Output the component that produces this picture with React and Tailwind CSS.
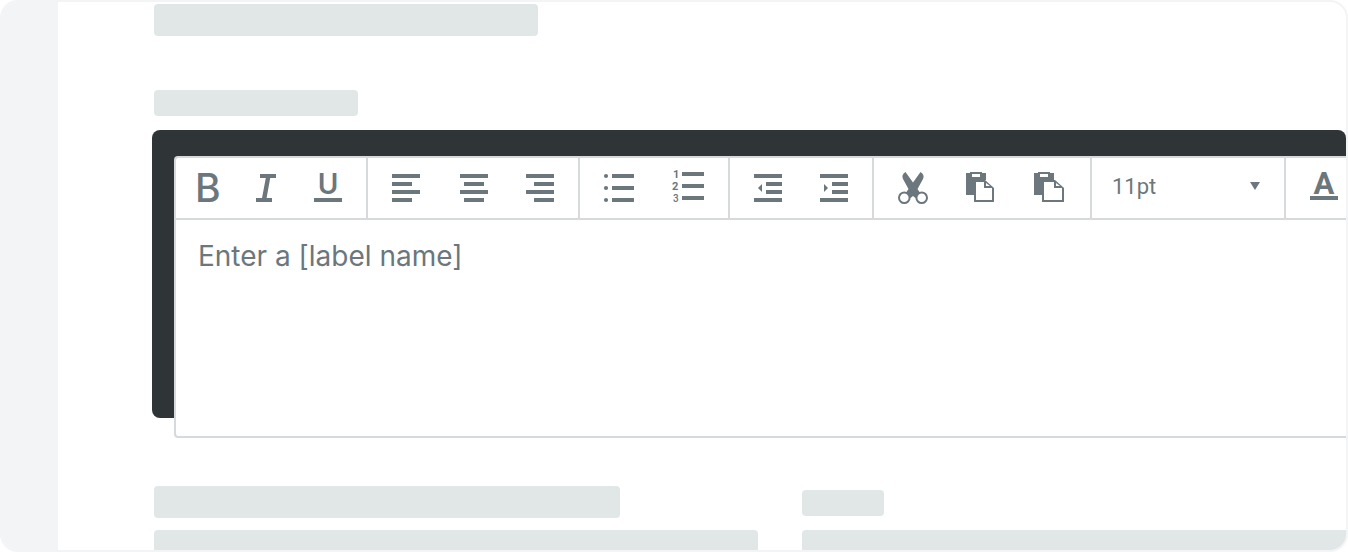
const bar = "rounded bg-[#e1e6e6]";

function Icon({ children }) {
  return (
    <svg
      viewBox="0 0 32 32"
      className="block size-8 overflow-visible"
      fill="currentColor"
      aria-hidden="true"
    >
      {children}
    </svg>
  );
}

function Tool({ label, children }) {
  return (
    <button type="button" aria-label={label} className="size-8 shrink-0">
      <Icon>{children}</Icon>
    </button>
  );
}

function Group({ className, children }) {
  return (
    <div role="group" className={`flex shrink-0 items-center border-r-2 border-[#d7dadd] ${className}`}>
      {children}
    </div>
  );
}

function Clipboard({ right }) {
  return (
    <>
      <path
        fillRule="evenodd"
        d="M2 1H6V0H18V1H22V8H10V23H2ZM8 2V5H16V2Z"
      />
      <path
        fillRule="evenodd"
        d={`M10 8H${right - 9}L${right} 16V30H10ZM12 10V28H${right - 2}V16H${right - 10}V10ZM${right - 8} 11V14H${right - 4}Z`}
      />
    </>
  );
}

function Toolbar() {
  return (
    <div role="toolbar" aria-label="Formatting" className="flex h-[62px] border-b-2 border-[#d7dadd] text-[#6b777c]">
      <Group className="w-48 gap-[26px] pl-5">
        <Tool label="Bold">
          <text x="-1" y="30" className="font-[Inter] text-[39px] font-medium">B</text>
        </Tool>
        <Tool label="Italic">
          <path d="M6 2H22V6H16.2L12.6 26H18V30H2V26H8L11.8 6H6Z" />
        </Tool>
        <Tool label="Underline">
          <text x="16" y="22" textAnchor="middle" className="font-[Inter] text-[28px] font-semibold">U</text>
          <path d="M2 26H30V30H2Z" />
        </Tool>
      </Group>
      <Group className="w-[212px] gap-[35px] pl-[22px]">
        <Tool label="Align left">
          <path d="M2 2H30V6H2ZM2 10H22V14H2ZM2 18H30V22H2ZM2 26H22V30H2Z" />
        </Tool>
        <Tool label="Align center">
          <path d="M3 2H31V6H3ZM7 10H27V14H7ZM3 18H31V22H3ZM7 26H27V30H7Z" />
        </Tool>
        <Tool label="Align right">
          <path d="M2 2H30V6H2ZM10 10H30V14H10ZM2 18H30V22H2ZM10 26H30V30H10Z" />
        </Tool>
      </Group>
      <Group className="w-[150px] gap-[38px] pl-[22px]">
        <Tool label="Bulleted list">
          <circle cx="4" cy="4" r="2.1" />
          <circle cx="4" cy="16" r="2.1" />
          <circle cx="4" cy="28" r="2.1" />
          <path d="M10 2H32V6H10ZM10 14H32V18H10ZM10 26H32V30H10Z" />
        </Tool>
        <Tool label="Numbered list">
          <g className="font-[Roboto] text-[11px] font-bold">
            <text x="1" y="6">1</text>
            <text x="0" y="18">2</text>
            <text x="1" y="30" className="text-[10px] font-medium">3</text>
          </g>
          <path d="M10 0H32V4H10ZM10 12H32V16H10ZM10 24H32V28H10Z" />
        </Tool>
      </Group>
      <Group className="w-36 gap-[34px] pl-[22px]">
        <Tool label="Decrease indent">
          <path d="M2 2H30V6H2ZM14 10H30V14H14ZM14 18H30V22H14ZM2 26H30V30H2ZM10 12V20L6 16Z" />
        </Tool>
        <Tool label="Increase indent">
          <path d="M2 2H30V6H2ZM14 10H30V14H14ZM14 18H30V22H14ZM2 26H30V30H2ZM6 12V20L10 16Z" />
        </Tool>
      </Group>
      <Group className="w-[218px] gap-9 pl-[22px]">
        <Tool label="Cut">
          <path d="M9.5 0Q5 3 7 7L12.5 17L10.5 20L12 26H14.5L17 24L19.5 26H22L23.5 20L21.5 17L27 7Q29 3 24.5 0L17 10.5Z" />
          <circle cx="8.3" cy="25.7" r="5.3" fill="white" stroke="currentColor" strokeWidth="2" />
          <circle cx="25.7" cy="25.7" r="5.3" fill="white" stroke="currentColor" strokeWidth="2" />
        </Tool>
        <Tool label="Copy">
          <Clipboard right={30} />
        </Tool>
        <Tool label="Paste">
          <Clipboard right={32} />
        </Tool>
      </Group>
      <div className="relative flex w-[194px] shrink-0 border-r-2 border-[#d7dadd]">
        <select
          aria-label="Font size"
          defaultValue="11pt"
          className="w-full appearance-none bg-transparent pb-1 pl-5 font-[Roboto,sans-serif] text-[22px]"
        >
          <option>11pt</option>
          <option>12pt</option>
          <option>14pt</option>
        </select>
        <svg
          viewBox="0 0 10 8"
          className="pointer-events-none absolute top-6 right-6 h-2 w-2.5"
          fill="currentColor"
          aria-hidden="true"
        >
          <path d="M0 0H10L5 8Z" />
        </svg>
      </div>
      <div className="flex shrink-0 items-center pl-[22px]">
        <Tool label="Text color">
          <text x="16" y="22" textAnchor="middle" className="font-[Roboto] text-[31px] font-bold">A</text>
          <path d="M2 24H30V28H2Z" />
        </Tool>
      </div>
    </div>
  );
}

export default function App() {
  return (
    <div className="flex overflow-hidden rounded-[18px] border-2 border-[#f3f4f6] bg-white">
      <aside className="w-14 shrink-0 bg-[#f3f4f6]" />
      <main className="min-w-0 grow pt-0.5 pl-24">
        <div className={`h-8 w-96 ${bar}`} />
        <div className={`mt-[54px] h-[26px] w-[204px] ${bar}`} />
        <section className="mt-3.5 -ml-0.5 grid">
          <div className="col-start-1 row-start-1 mb-5 rounded-lg bg-[#2f3437]" />
          <div className="z-10 col-start-1 row-start-1 mt-[26px] ml-[22px] overflow-hidden rounded-l border-2 border-r-0 border-[#d7dadd] bg-white">
            <Toolbar />
            <textarea
              aria-label="Label name"
              placeholder="Enter a [label name]"
              className="block h-[216px] w-full resize-none px-[22px] pt-4 font-[Inter,sans-serif] text-[28px] leading-10 text-[#6b777c] outline-none placeholder:text-[#6b777c]"
            />
          </div>
        </section>
        <div className="mt-12 grid grid-cols-[604fr_544fr] gap-x-11 gap-y-3">
          <div className={`h-8 w-[466px] ${bar}`} />
          <div className={`mt-1 h-[26px] w-[82px] ${bar}`} />
          <div className="h-5 rounded-t bg-[#e1e6e6]" />
          <div className="h-5 rounded-tl bg-[#e1e6e6]" />
        </div>
      </main>
    </div>
  );
}
